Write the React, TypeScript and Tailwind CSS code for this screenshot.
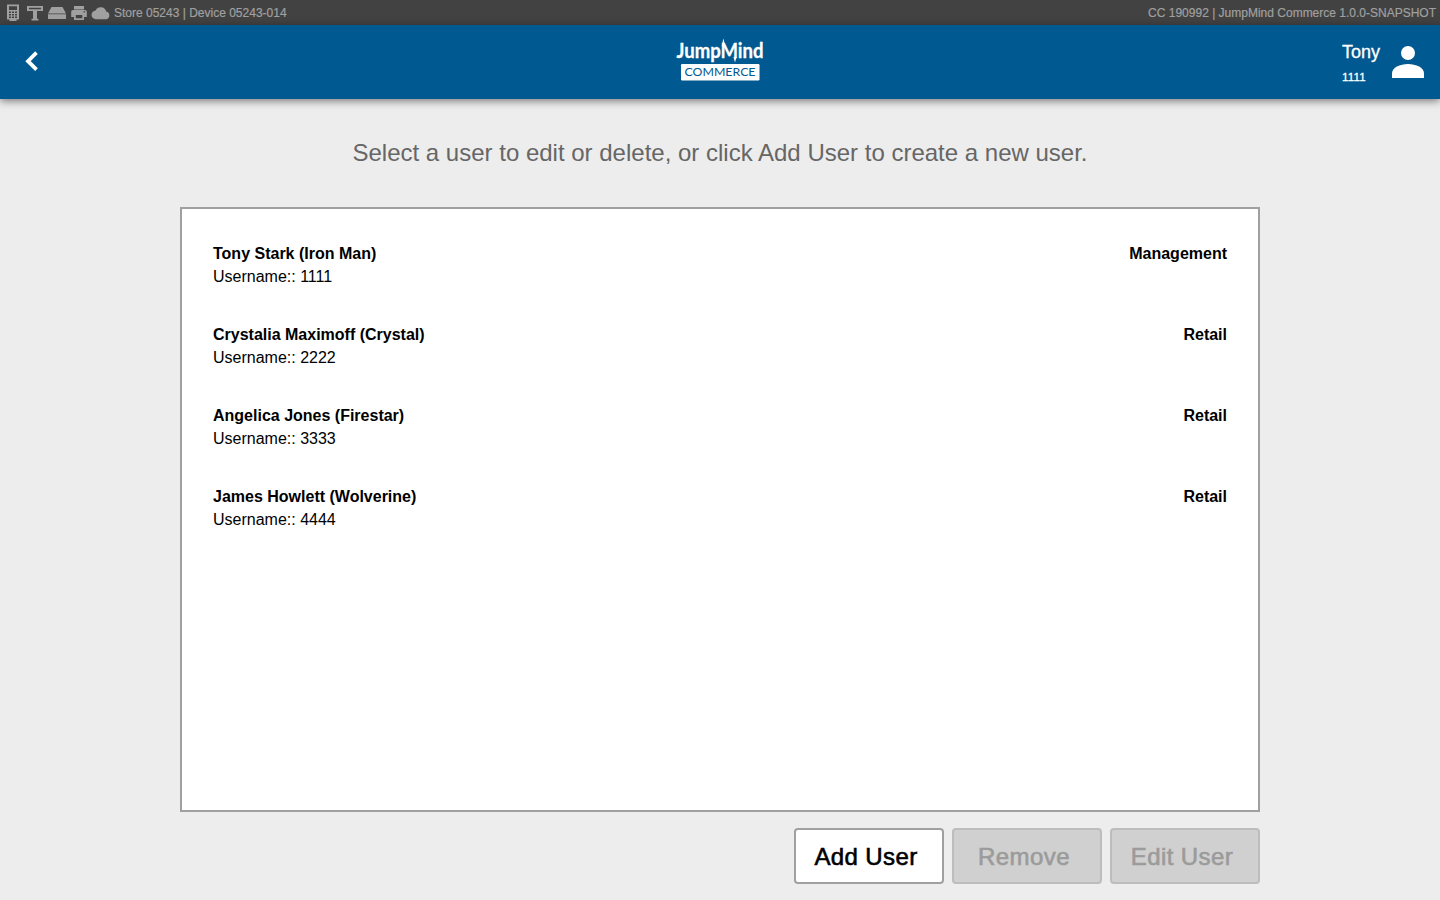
import React from "react";

const users = [
  { name: "Tony Stark (Iron Man)", username: "1111", role: "Management" },
  { name: "Crystalia Maximoff (Crystal)", username: "2222", role: "Retail" },
  { name: "Angelica Jones (Firestar)", username: "3333", role: "Retail" },
  { name: "James Howlett (Wolverine)", username: "4444", role: "Retail" },
];

function StatusIcons() {
  return (
    <svg width="110" height="26" viewBox="0 0 110 26" fill="#a0a0a0" aria-hidden="true">
      <path fillRule="evenodd" d="M7 4.500h12V19.500H16.500V21H9.500V19.500H7zM9 6.200v3.800h8V6.200zM9 11.500v1.500h2v-1.500zm3 0v1.500h2v-1.500zm3 0v1.500h2v-1.500zM9 14v1.500h2V14zm3 0v1.500h2V14zm3 0v1.500h2V14zM9 16.500v1.500h2v-1.500zm3 0v1.500h2v-1.500zm3 0v1.500h2v-1.500z" />
      <path fillRule="evenodd" d="M27 6h16v5h-6v7.700h1.500V20.500h-7v-1.800H33V11h-6zM29 7.700v1.600h12V7.700z" />
      <path d="M51.500 7h11l3.500 6.500H48zM48 14.200h18V19H48z" />
      <path fillRule="evenodd" d="M74 6h10v3.500H74zM73 10h12a1.800 1.800 0 0 1 1.800 1.800V17H84v3H74v-3h-2.800v-5.200A1.800 1.800 0 0 1 73 10zm2.800 5v3.300h6.500V15zM83.500 11.300v1.300h1.500v-1.300z" />
      <path d="M96 19.200a4.300 4.300 0 0 1-.4-8.600 5.700 5.700 0 0 1 10.600.8 4 4 0 0 1 .1 7.800z" />
    </svg>
  );
}

function Logo() {
  return (
    <svg className="overflow-visible" width="100" height="54" viewBox="670 34 100 54" role="img" aria-label="JumpMind Commerce">
      <text x="676.500" y="57.500" fill="#fff" stroke="#fff" strokeWidth="0.3" fontFamily="Lato, 'Liberation Sans', sans-serif" fontWeight="700" fontSize="20.500" textLength="87" lengthAdjust="spacingAndGlyphs">JumpMind</text>
      <path d="M721.800 46L723.300 38.500L726 48zM733.500 57h3L735 62.500z" fill="#fff" />
      <rect x="681" y="64" width="78.500" height="16.500" rx="1.200" fill="#fff" />
      <text x="684.500" y="76.400" fill="#005990" fontFamily="Lato, sans-serif" fontSize="11.500" textLength="71" lengthAdjust="spacingAndGlyphs">COMMERCE</text>
    </svg>
  );
}

export default function App() {
  return (
    <div className="flex h-[900px] w-full flex-col overflow-hidden bg-[#ededed] font-['Liberation_Sans',Arial,sans-serif] text-black">
      <div className="flex h-[25px] shrink-0 items-center justify-between bg-[#424242] pr-1 text-xs text-[#a0a0a0]">
        <div className="flex items-center gap-[4px]">
          <StatusIcons />
          <span className="[-webkit-text-stroke:0.2px_#a0a0a0]">Store 05243 | Device 05243-014</span>
        </div>
        <span className="[-webkit-text-stroke:0.2px_#a0a0a0]">CC 190992 | JumpMind Commerce 1.0.0-SNAPSHOT</span>
      </div>
      <header className="z-10 grid h-[74px] shrink-0 grid-cols-3 items-center bg-[#005990] px-4 text-white shadow-[0_2px_8px_rgba(0,0,0,0.5)]">
        <button aria-label="Back" className="mb-[2px] ml-2 w-4">
          <svg width="16" height="22" viewBox="24 50 16 22" fill="none" stroke="#fff" strokeWidth="3.800"><path d="M36.500 52.700L28 61.200L36.500 69.700" /></svg>
        </button>
        <div className="flex justify-center pb-[2px]"><Logo /></div>
        <div className="flex items-center justify-end gap-3">
          <div className="flex flex-col pt-[3px]">
            <span className="text-lg leading-6 [-webkit-text-stroke:0.3px_#fff]">Tony</span>
            <span className="mt-[3px] text-[11.5px] leading-5 tracking-[0.2px] [-webkit-text-stroke:0.3px_#fff]">1111</span>
          </div>
          <svg width="32" height="32" viewBox="0 0 32 32" fill="#fff"><circle cx="16" cy="7" r="7" /><path d="M0 32v-4.500C0 21.500 8 18 16 18s16 3.500 16 9.500V32z" /></svg>
        </div>
      </header>
      <main className="flex grow flex-col items-center">
        <h1 className="mt-[37px] text-2xl leading-[34px] whitespace-nowrap text-[#666]">Select a user to edit or delete, or click Add User to create a new user.</h1>
        <section className="mt-[37px] flex h-[605px] w-[1080px] shrink-0 flex-col border-2 border-[#a0a0a0] bg-white px-[31px] pt-[33px]">
          {users.map((user) => (
            <div key={user.username} className="flex h-[81px] justify-between text-base leading-[23px]">
              <div>
                <div className="font-bold">{user.name}</div>
                <div>Username:: {user.username}</div>
              </div>
              <div className="font-bold">{user.role}</div>
            </div>
          ))}
        </section>
        <div className="mt-4 flex w-[1080px] justify-end gap-2 text-2xl tracking-[0.4px]">
          <button className="h-14 w-[150px] rounded border-2 border-[#a0a0a0] bg-white pt-[2px] pr-[6px] [-webkit-text-stroke:0.6px_#000]">Add User</button>
          <button disabled className="h-14 w-[150px] rounded border-2 border-[#bdbdbd] bg-[#d0d0d0] pt-[2px] pr-[6px] text-[#9b9b9b] [-webkit-text-stroke:0.6px_#9b9b9b]">Remove</button>
          <button disabled className="h-14 w-[150px] rounded border-2 border-[#bdbdbd] bg-[#d0d0d0] pt-[2px] pr-[6px] text-[#9b9b9b] [-webkit-text-stroke:0.6px_#9b9b9b]">Edit User</button>
        </div>
      </main>
    </div>
  );
}
